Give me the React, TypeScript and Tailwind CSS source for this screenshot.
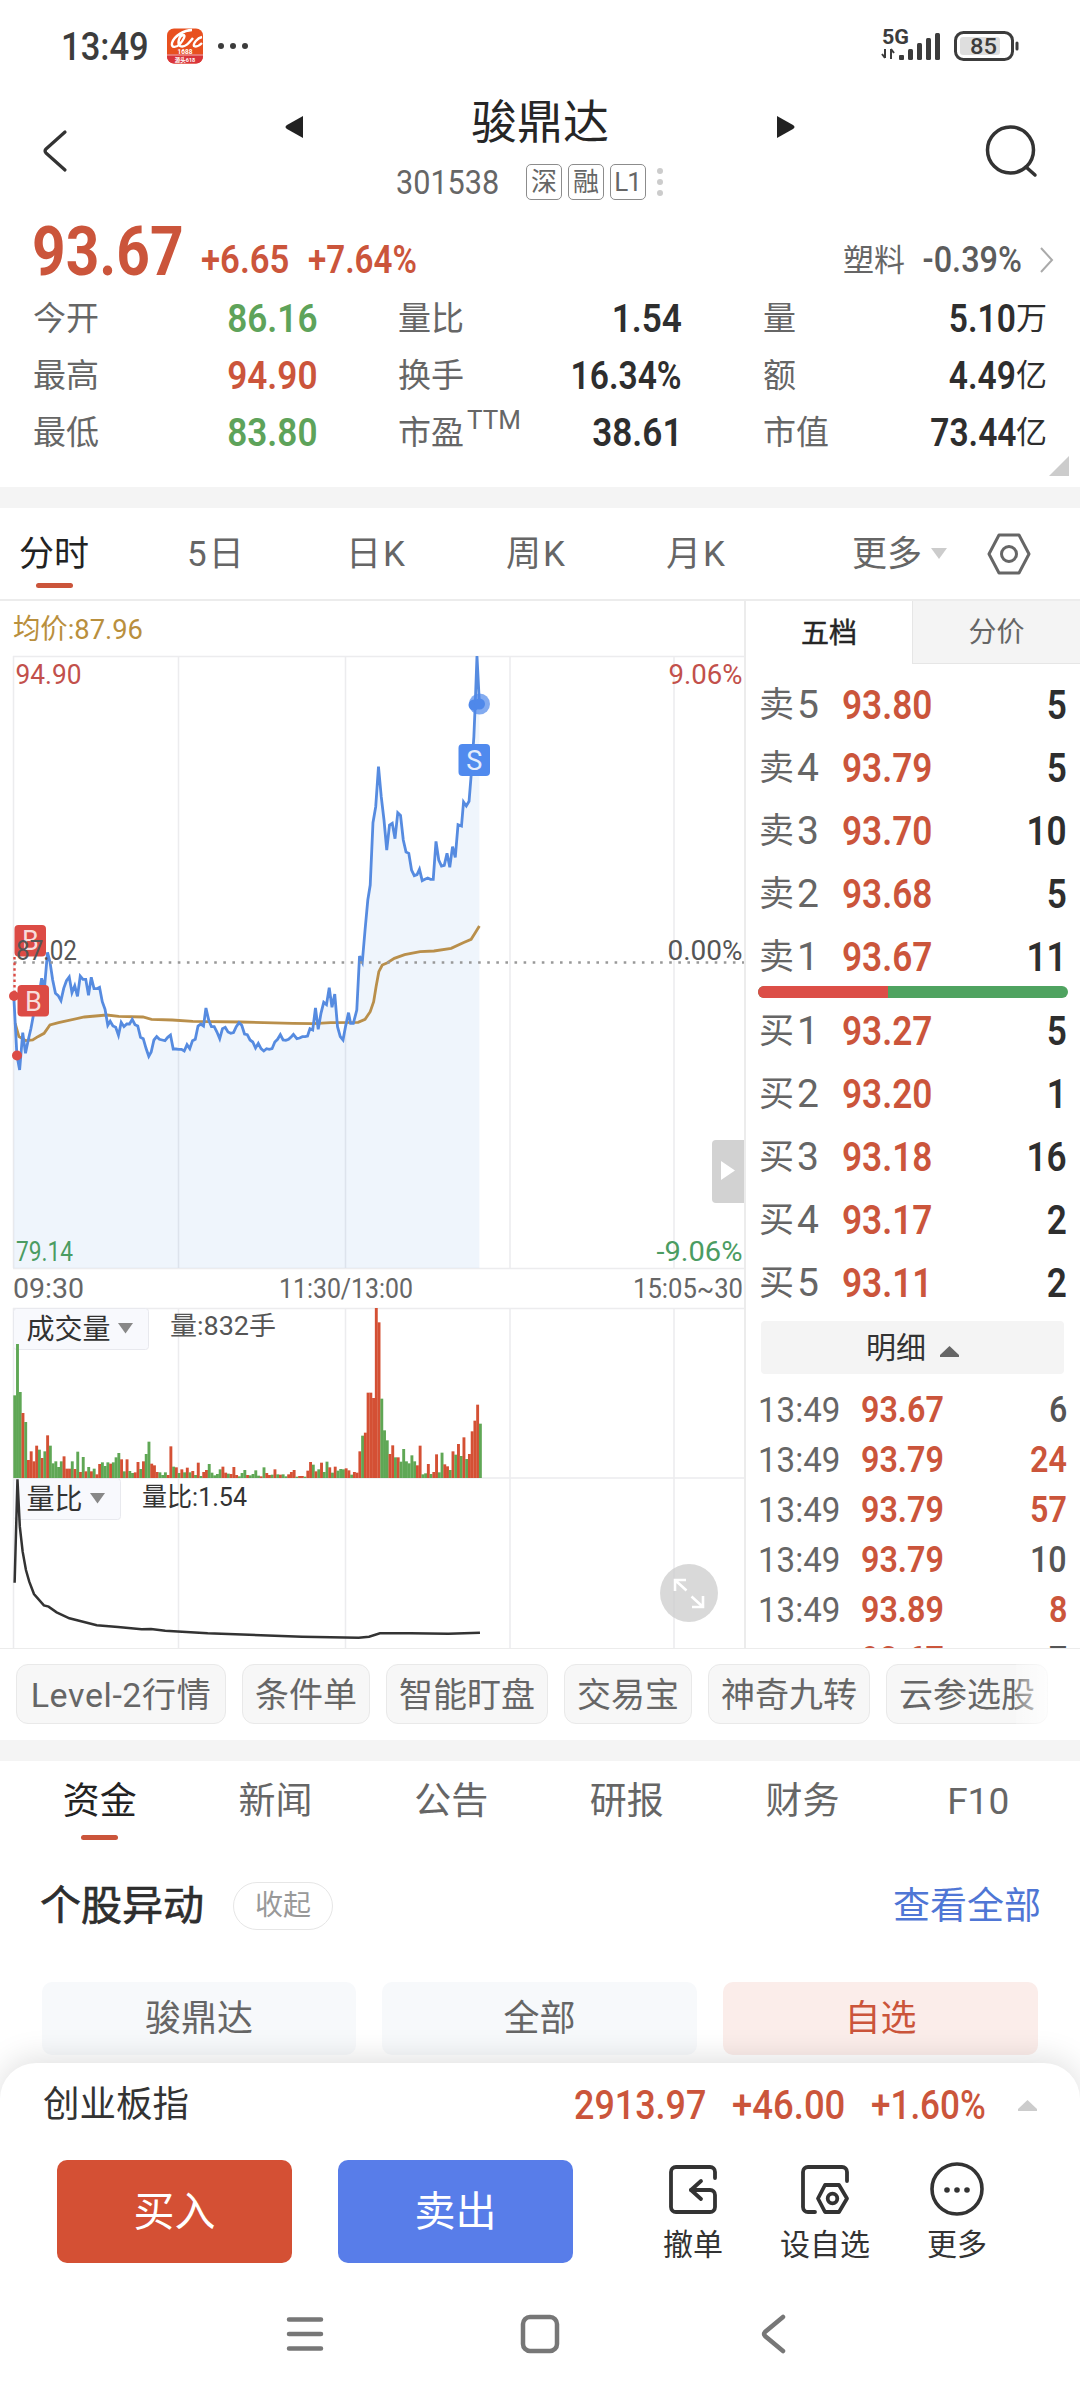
import { clsx } from "clsx";

type Level = { label: string; no: number; price: string; qty: string };

const asks: Level[] = [
  { label: "卖", no: 5, price: "93.80", qty: "5" },
  { label: "卖", no: 4, price: "93.79", qty: "5" },
  { label: "卖", no: 3, price: "93.70", qty: "10" },
  { label: "卖", no: 2, price: "93.68", qty: "5" },
  { label: "卖", no: 1, price: "93.67", qty: "11" },
];

const bids: Level[] = [
  { label: "买", no: 1, price: "93.27", qty: "5" },
  { label: "买", no: 2, price: "93.20", qty: "1" },
  { label: "买", no: 3, price: "93.18", qty: "16" },
  { label: "买", no: 4, price: "93.17", qty: "2" },
  { label: "买", no: 5, price: "93.11", qty: "2" },
];

const ticks = [
  { time: "13:49", price: "93.67", qty: "6", up: false },
  { time: "13:49", price: "93.79", qty: "24", up: true },
  { time: "13:49", price: "93.79", qty: "57", up: true },
  { time: "13:49", price: "93.79", qty: "10", up: false },
  { time: "13:49", price: "93.89", qty: "8", up: true },
  { time: "", price: "93.67", qty: "7", up: false },
];

const priceLine =
  "40,1067 49,1245 57,1290 66,1178 74,1240 82,1200 90,1165 98,1120 106,1090 114,1060 121,1015 129,1045 138,937 145,965 153,1020 161,1060 169,1067 177,1082 185,1045 193,1022 201,1011 209,1058 217,1037 225,1069 233,1008 241,1018 249,1018 257,1066 265,1012 273,1046 281,1046 289,1042 297,1085 305,1108 313,1156 320,1144 328,1158 336,1162 344,1186 352,1147 360,1160 368,1152 376,1152 384,1138 392,1154 400,1158 408,1192 416,1196 424,1225 432,1249 439,1236 447,1200 455,1190 463,1198 471,1200 479,1202 487,1192 495,1185 503,1227 511,1227 519,1228 527,1228 535,1233 543,1214 551,1226 559,1202 567,1198 575,1158 583,1152 591,1158 598,1104 606,1140 614,1160 622,1160 630,1176 638,1196 646,1166 654,1162 662,1176 670,1180 678,1178 686,1160 694,1148 702,1156 710,1182 718,1184 726,1200 734,1206 742,1224 750,1210 758,1226 766,1233 774,1226 782,1228 790,1226 798,1206 806,1198 814,1184 822,1200 830,1201 838,1198 846,1190 852,1183 862,1196 870,1194 878,1190 886,1190 893,1188 900,1166 908,1170 916,1104 924,1168 932,1120 940,1087 948,1094 956,1043 964,1102 972,1062 980,1160 988,1190 996,1200 1004,1156 1012,1118 1018,1150 1026,1150 1036,1110 1044,948 1052,966 1060,870 1068,780 1075,735 1083,548 1091,500 1099,380 1107,470 1115,540 1123,630 1131,555 1139,550 1147,596 1155,518 1163,526 1171,600 1179,636 1187,640 1195,690 1203,707 1211,704 1218,688 1226,722 1234,718 1242,714 1250,718 1258,718 1266,604 1274,660 1282,678 1290,676 1298,640 1306,682 1314,620 1322,652 1330,554 1340,558 1346,486 1354,498 1362,484 1368,407 1376,290 1380,190 1385,48 1392,190";

const averageLine =
  "44,1150 55,1190 75,1202 95,1200 110,1190 128,1180 145,1155 170,1148 245,1131 310,1125 345,1129 415,1131 440,1138 500,1140 560,1144 700,1146 850,1150 910,1151 960,1148 1040,1147 1060,1138 1075,1115 1085,1085 1092,1040 1100,995 1110,975 1125,968 1145,955 1175,944 1220,935 1260,933 1310,925 1345,908 1368,898 1380,878 1392,858";

const ratioLine =
  "31,1208 37,898 42,1040 48,1115 55,1170 62,1205 72,1242 93,1276 103,1280 120,1297 147,1315 205,1336 250,1341 300,1348 320,1347 350,1352 440,1360 640,1370 760,1373 782,1370 805,1360 870,1360 950,1361 1017,1358";

// one entry per minute: g = down, r = up
const volumes =
  "g248 g402 g258 r195 g168 r54 r80 r50 r97 g85 r60 g80 r128 g97 g44 g50 g33 g50 r65 r28 r28 g50 r27 g79 r18 g63 r20 g33 r20 g28 r11 r42 g47 g36 g47 r43 g47 g62 g75 r56 g20 r56 g21 g15 r17 r48 g27 r50 g72 g109 r43 r38 r18 g17 g9 g17 r9 r95 g34 r32 g15 r26 g17 r31 g17 r21 g9 r46 g6 r18 r24 g42 g16 g8 g12 g26 r34 r16 g13 r12 r33 r9 g5 g15 g24 r9 g8 g12 g23 g7 r5 g32 r15 r9 g10 r26 g11 r10 g11 g5 r11 r18 r24 g4 r6 r6 g4 r22 r48 g40 r20 g26 r46 g18 g49 r32 g16 r34 g22 g27 g26 r29 r23 g10 r18 r16 r80 g127 r136 r256 r256 r240 r510 r467 g238 g143 g113 r72 r98 g62 r62 g49 g87 g50 g44 g68 g50 r38 r97 g11 g14 r42 g12 r18 r71 g17 g76 r41 r35 g24 r80 g70 r102 g66 r122 g57 r72 r140 r172 r220 g163".split(
    " ",
  );

function StatusBar() {
  return (
    <div className="flex h-[92px] shrink-0 items-center pl-[61px] pr-[60px] text-[#3c3c3c]">
      <span className="mt-px w-[106px] origin-left scale-x-[.91] text-[38px] font-medium leading-none">
        13:49
      </span>
      <svg width="36" height="36" viewBox="0 0 36 36">
        <rect width="36" height="35" y="0.5" rx="7" fill="#e8501f" />
        <path d="M0 26h36v2.500a7 7 0 0 1-7 7H7a7 7 0 0 1-7-7z" fill="#d9343b" />
        <path
          d="M25 2C17 2 7 8 5 15c-1 5 4 5 8 1 4-5 6-9 3-9-4 1-6 8-3 11 5 2 9-3 13-8M35 9c-5 1-9 7-8 9 2 1 5 0 8-3"
          fill="none"
          stroke="#fff"
          strokeWidth="2.400"
        />
        <path d="M0 27h36" stroke="#f6b9a8" strokeWidth="1" />
        <text x="18" y="26" fontSize="6.500" fontWeight="700" fill="#fff" textAnchor="middle">
          1688
        </text>
        <text x="18" y="33.500" fontSize="5.500" fontWeight="700" fill="#fff" textAnchor="middle">
          源头618
        </text>
      </svg>
      <div className="ml-[15px] flex gap-[6px]">
        <i className="size-[6px] rounded-full bg-[#3c3c3c]" />
        <i className="size-[6px] rounded-full bg-[#3c3c3c]" />
        <i className="size-[6px] rounded-full bg-[#3c3c3c]" />
      </div>
      <svg className="ml-auto mt-[-1px] overflow-visible" width="138" height="36" viewBox="0 0 138 36" fill="#3c3c3c">
        <text x="0" y="16" fontSize="20" fontWeight="700" textLength="27" lengthAdjust="spacingAndGlyphs">
          5G
        </text>
        <path d="M3 21v9M0 26l3 4M9 31v-10M12 25l-3-4" stroke="#3c3c3c" strokeWidth="2" fill="none" />
        <rect x="17" y="27" width="5" height="5" rx="1" />
        <rect x="26" y="21" width="5" height="11" rx="1.500" />
        <rect x="35" y="15" width="5" height="17" rx="1.500" />
        <rect x="44" y="10" width="5" height="22" rx="1.500" />
        <rect x="53" y="5" width="5" height="27" rx="1.500" />
        <rect x="73.500" y="4.500" width="57" height="27" rx="8" fill="none" stroke="#3c3c3c" strokeWidth="3" />
        <rect x="78" y="9" width="40" height="18" rx="3" fill="#dedede" />
        <rect x="133.500" y="13.500" width="3" height="9" rx="1.500" />
        <text x="88" y="25.500" fontSize="22" fontWeight="500" textLength="27" lengthAdjust="spacingAndGlyphs">
          85
        </text>
      </svg>
    </div>
  );
}

function Header() {
  return (
    <header className="flex h-[124px] shrink-0 items-start pl-[42px] pr-[41px]">
      <svg className="mt-[37px]" width="26" height="44" viewBox="0 0 26 44">
        <path d="M23 3L4 20q-2 2 0 4l19 17" fill="none" stroke="#333" strokeWidth="3.200" strokeLinecap="round" />
      </svg>
      <svg className="ml-[216px] mt-[23px]" width="20" height="24" viewBox="0 0 20 24">
        <path d="M19 1v22L3 14q-3-2 0-4z" fill="#222" />
      </svg>
      <div className="mx-auto flex w-[300px] flex-col items-center">
        <h1 className="mt-[5px] text-[46px] font-normal leading-[50px] text-[#262626]">骏鼎达</h1>
        <div className="mr-[22px] mt-[16px] flex h-[37px] items-center gap-[6px] text-[#666]">
          <span className="mr-[7px] w-[117px] origin-left scale-x-[.9] text-[34px] leading-none">301538</span>
          {["深", "融", "L1"].map((tag) => (
            <span
              key={tag}
              className="flex size-[36px] items-center justify-center rounded-[5px] border border-[#8c8c8c] text-[26px] leading-none tracking-[-1px]"
            >
              {tag}
            </span>
          ))}
          <span className="ml-[5px] flex flex-col gap-[5px]">
            <i className="size-[6px] rounded-full bg-[#ccc]" />
            <i className="size-[6px] rounded-full bg-[#ccc]" />
            <i className="size-[6px] rounded-full bg-[#ccc]" />
          </span>
        </div>
      </div>
      <svg className="mr-[189px] mt-[23px]" width="20" height="24" viewBox="0 0 20 24">
        <path d="M1 1v22l16-9q3-2 0-4z" fill="#222" />
      </svg>
      <svg className="mt-[32px]" width="54" height="54" viewBox="0 0 54 54" fill="none" stroke="#333" strokeWidth="3.500">
        <circle cx="25.500" cy="26" r="23" />
        <path d="M41 43l9 8" strokeLinecap="round" />
      </svg>
    </header>
  );
}

type StatProps = { label: string; sup?: string; value: string; unit?: string; tone?: "up" | "down" };

function Stat({ label, sup, value, unit, tone }: StatProps) {
  return (
    <div className="flex h-[57px] items-center justify-between">
      <span className="flex items-center text-[33px] leading-none text-[#666]">
        {label}
        {sup && <sup className="top-0 -mt-[26px] ml-[3px] text-[26px] leading-none">{sup}</sup>}
      </span>
      <span
        className={clsx(
          "flex items-center whitespace-nowrap leading-none",
          tone === "up" && "text-[#cb553b]",
          tone === "down" && "text-[#5ea35a]",
          !tone && "text-[#2e2e2e]",
        )}
      >
        <b
          className={clsx(
            "origin-right text-[39.500px] font-semibold",
            value.endsWith("%") || unit ? "scale-x-[.85]" : "scale-x-[.89]",
          )}
        >
          {value}
        </b>
        {unit && <span className="text-[31px]">{unit}</span>}
      </span>
    </div>
  );
}

function Quote() {
  return (
    <section className="flex h-[271px] shrink-0 flex-col">
      <div className="flex h-[73px] items-center text-[#cb553b]">
        <b className="-mt-[2px] ml-[32px] w-[169px] origin-left scale-x-[.85] text-[69px] font-bold leading-none">93.67</b>
        <span className="mt-[16px] w-[107px] origin-left scale-x-[.89] text-[39px] font-semibold leading-none">+6.65</span>
        <span className="mt-[16px] origin-left scale-x-[.85] text-[39px] font-semibold leading-none">+7.64%</span>
        <span className="ml-auto mt-[15px] text-[31px] leading-none text-[#666]">塑料</span>
        <span className="mt-[16px] w-[117px] origin-right scale-x-[.89] whitespace-nowrap text-right text-[36.500px] font-medium leading-none text-[#5c5c5c]">
          -0.39%
        </span>
        <svg className="ml-[18px] mr-[26px] mt-[14px]" width="14" height="26" viewBox="0 0 14 26">
          <path d="M1 1l11 12L1 25" fill="none" stroke="#aaa" strokeWidth="2" />
        </svg>
      </div>
      <div className="mt-px grid grid-cols-[284px_284px_284px] gap-x-[81px] pl-[33px]">
        <Stat label="今开" value="86.16" tone="down" />
        <Stat label="量比" value="1.54" />
        <Stat label="量" value="5.10" unit="万" />
        <Stat label="最高" value="94.90" tone="up" />
        <Stat label="换手" value="16.34%" />
        <Stat label="额" value="4.49" unit="亿" />
        <Stat label="最低" value="83.80" tone="down" />
        <Stat label="市盈" sup="TTM" value="38.61" />
        <Stat label="市值" value="73.44" unit="亿" />
      </div>
      <svg className="ml-auto mr-[11px] mt-[-5px]" width="20" height="20" viewBox="0 0 20 20">
        <path d="M20 0v20H0z" fill="#ccc" />
      </svg>
    </section>
  );
}

function PeriodTabs() {
  return (
    <nav className="flex h-[93px] shrink-0 items-center border-b-2 border-[#ececec] pl-[19px] pt-[2px] text-[35px] leading-none text-[#666]">
      <span className="relative w-[168px] text-[#222]">
        分时
        <i className="absolute -bottom-[16px] left-[17px] h-[5px] w-[37px] rounded-full bg-[#cb553b]" />
      </span>
      <span className="w-[159px] tracking-[2px]">5日</span>
      <span className="w-[160px] tracking-[2px]">日K</span>
      <span className="w-[160px] tracking-[2px]">周K</span>
      <span className="w-[186px] tracking-[2px]">月K</span>
      <span>更多</span>
      <svg className="-mt-[2px] ml-[9px]" width="16" height="11" viewBox="0 0 16 11">
        <path d="M0 0h16L8 11z" fill="#ccc" />
      </svg>
      <svg className="-mt-[2px] ml-[40px]" width="44" height="42" viewBox="0 0 44 42" fill="none" stroke="#666" strokeWidth="3">
        <path d="M12 2h20l10 19-10 19H12L2 21z" strokeLinejoin="round" />
        <circle cx="22" cy="21" r="7.500" />
      </svg>
    </nav>
  );
}

function Charts() {
  const label = { lengthAdjust: "spacingAndGlyphs" as const, fontSize: 28 };
  return (
    <svg width="744" height="1047" viewBox="0 601 744 1047" className="block shrink-0">
      {/* grid */}
      <g fill="none" stroke="#ececee" strokeWidth="1.500">
        <path d="M13 656.500H744M13 1268.500H744M13 1308.500H744M13 1478H744" />
        <path d="M13.500 656V1268M178.500 656V1268M345.500 656V1268M510 656V1268M674 656V1268" />
        <path d="M13.500 1308V1648M178.500 1308V1648M345.500 1308V1648M510 1308V1648M674 1308V1648" />
      </g>

      {/* price */}
      <g transform="translate(0 640) scale(.34439 .33333)">
        <polygon points={`40,1884 ${priceLine} 1392,1884`} fill="#4b86e0" fillOpacity=".085" />
        <polyline points={averageLine} fill="none" stroke="#b98f4b" strokeWidth="2.800" vectorEffect="non-scaling-stroke" />
        <polyline points={priceLine} fill="none" stroke="#568be0" strokeWidth="2.800" vectorEffect="non-scaling-stroke" />
      </g>
      <path d="M14 962.500H744" stroke="#999" strokeWidth="2.400" strokeDasharray="2.600 6.500" />
      <circle cx="479.500" cy="704" r="10.500" fill="#4f88ea" fillOpacity=".7" />
      <circle cx="474" cy="705" r="5.500" fill="#4f88ea" />
      <circle cx="479.500" cy="704" r="5.500" fill="#4f88ea" />
      <rect x="458.500" y="744" width="31.500" height="32" rx="4" fill="#508aee" />
      <text x="474.300" y="769.500" fontSize="27" fill="#e4edfc" textAnchor="middle">
        S
      </text>
      <path d="M14.500 957V996" stroke="#dc4b45" strokeWidth="2.400" strokeDasharray="2.600 3" />
      <circle cx="14" cy="996" r="5" fill="#dc4b45" />
      <circle cx="17" cy="1055.500" r="5" fill="#dc4b45" />
      <rect x="14.500" y="925" width="31.500" height="31.500" rx="4" fill="#dc4b45" />
      <text x="30.500" y="950" fontSize="27" fill="#f8dcdb" textAnchor="middle">
        B
      </text>
      <rect x="17.500" y="985" width="31.500" height="31.500" rx="4" fill="#dc4b45" />
      <text x="33.300" y="1010.500" fontSize="27" fill="#f8dcdb" textAnchor="middle">
        B
      </text>

      <text x="13" y="638.500" textLength="130" {...label} fill="#b98f3d">
        均价:87.96
      </text>
      <text x="15.500" y="684" textLength="66" {...label} fill="#c2504b">
        94.90
      </text>
      <text x="668.500" y="684" textLength="74" {...label} fill="#c2504b">
        9.06%
      </text>
      <text x="16" y="960" textLength="61" {...label} fill="#555">
        87.02
      </text>
      <text x="667.500" y="960" textLength="75" {...label} fill="#555">
        0.00%
      </text>
      <text x="16" y="1261" textLength="57" {...label} fill="#4b9c62">
        79.14
      </text>
      <text x="656.500" y="1261" textLength="86" {...label} fill="#4b9c62">
        -9.06%
      </text>
      <g fill="#666">
        <text x="13" y="1298" textLength="71" {...label}>
          09:30
        </text>
        <text x="279" y="1298" textLength="134" {...label}>
          11:30/13:00
        </text>
        <text x="633" y="1298" textLength="110" {...label}>
          15:05~30
        </text>
      </g>

      {/* side handle */}
      <path d="M744 1140h-28a4 4 0 0 0-4 4v55a4 4 0 0 0 4 4h28z" fill="#d2d2d2" />
      <path d="M721 1161v19l14-9.500z" fill="#fff" />

      {/* volume */}
      <rect x="13.500" y="1308.500" width="135" height="41" rx="3" fill="#f8f9fd" stroke="#e8e9ee" />
      {volumes.map((v, i) => {
        const h = Number(v.slice(1)) / 3;
        return (
          <rect
            key={i}
            x={13.3 + i * 2.739}
            y={1478 - h}
            width="2.900"
            height={h}
            fill={v[0] === "g" ? "#5fa755" : "#d45034"}
          />
        );
      })}
      <text x="26.500" y="1339" fontSize="28" textLength="84" fill="#333">
        成交量
      </text>
      <path d="M118 1323h15l-7.500 10.500z" fill="#888" />
      <text x="170" y="1335" textLength="106" {...label} fontSize={26} fill="#555">
        量:832手
      </text>

      {/* volume ratio */}
      <rect x="13.500" y="1478.500" width="107" height="41" rx="3" fill="#f8f9fd" stroke="#e8e9ee" />
      <g transform="translate(0 1180) scale(.47194 .33333)">
        <polyline points={ratioLine} fill="none" stroke="#333" strokeWidth="2.500" vectorEffect="non-scaling-stroke" />
      </g>
      <text x="26.500" y="1509" fontSize="28" textLength="56" fill="#333">
        量比
      </text>
      <path d="M90 1493h15l-7.500 10.500z" fill="#888" />
      <text x="142" y="1505.500" textLength="105" {...label} fontSize={26} fill="#333">
        量比:1.54
      </text>

      {/* expand */}
      <circle cx="689" cy="1593" r="29" fill="#ccc" fillOpacity=".75" />
      <path
        d="M675 1591v-11h11M675.500 1580.500l11 10M703 1596v11h-11M702.500 1606.500l-11-10"
        fill="none"
        stroke="#fff"
        strokeWidth="2.600"
      />
    </svg>
  );
}

function LevelRow({ label, no, price, qty }: Level) {
  return (
    <div className="flex h-[63px] items-center leading-none">
      <span className="flex w-[83px] items-center text-[35px] text-[#666]">
        {label}
        <span className="ml-[3px] text-[39px]">{no}</span>
      </span>
      <b className="origin-left scale-x-[.88] text-[40px] font-semibold text-[#cb553b]">{price}</b>
      <b className="ml-auto origin-right scale-x-[.88] text-[40px] font-semibold text-[#2e2e2e]">{qty}</b>
    </div>
  );
}

function OrderBook() {
  return (
    <aside className="flex h-[1047px] w-[336px] shrink-0 flex-col overflow-hidden border-l-2 border-[#ececec]">
      <div className="flex h-[63px] shrink-0 text-[28px] leading-none">
        <span className="flex w-[166px] items-center justify-center pt-[2px] text-[#262626] [-webkit-text-stroke:0.5px]">
          五档
        </span>
        <span className="flex flex-1 items-center justify-center border-b border-l border-[#e6e6e6] bg-[#f4f4f4] pt-[2px] text-[#666]">
          分价
        </span>
      </div>
      <div className="flex flex-col pl-[13px] pr-[13px] pt-[10px]">
        {asks.map((level) => (
          <LevelRow key={level.no} {...level} />
        ))}
        <div className="mt-[-3px] -ml-px flex h-[12px] w-[310px] overflow-hidden rounded-full bg-[#4fa360]">
          <i className="w-[130px] bg-[#dc4e47]" />
        </div>
        <div className="h-[2px]" />
        {bids.map((level) => (
          <LevelRow key={level.no} {...level} />
        ))}
      </div>
      <div className="ml-[15px] mt-[6px] flex h-[53px] w-[303px] shrink-0 items-center justify-center gap-[14px] rounded-[4px] bg-[#f4f4f4] text-[30px] leading-none text-[#333]">
        明细
        <svg className="mt-[8px]" width="19" height="11" viewBox="0 0 19 11">
          <path d="M9.500 0L19 9v2H0V9z" fill="#666" />
        </svg>
      </div>
      <div className="flex flex-col pl-[12px] pr-[13px] pt-[11px]">
        {ticks.map((tick, i) => (
          <div key={i} className="flex h-[50px] shrink-0 items-center leading-none">
            <span className="w-[103px] origin-left scale-x-[.96] text-[34.500px] text-[#666]">{tick.time}</span>
            <b className="origin-left scale-x-[.86] text-[37.500px] font-semibold text-[#cb553b]">{tick.price}</b>
            <b
              className={clsx(
                "ml-auto origin-right scale-x-[.86] text-[37.500px]",
                tick.up ? "font-semibold text-[#cb553b]" : "font-medium text-[#555]",
              )}
            >
              {tick.qty}
            </b>
          </div>
        ))}
      </div>
    </aside>
  );
}

function Shortcuts() {
  const items = ["Level-2行情", "条件单", "智能盯盘", "交易宝", "神奇九转", "云参选股"];
  const widths = ["w-[210px]", "w-[128px]", "w-[162px]", "w-[128px]", "w-[162px]", "w-[162px]"];
  return (
    <div className="relative flex h-[92px] shrink-0 gap-[16px] border-t border-[#ececec] pl-[16px] pt-[15px]">
      {items.map((item, i) => (
        <span
          key={item}
          className={clsx(
            "flex h-[60px] shrink-0 items-center justify-center whitespace-nowrap rounded-[12px] border border-[#e9e9e9] bg-[#f7f7f7] pt-px text-[34px] leading-none text-[#666]",
            i === 0 && "tracking-[.6px]",
            widths[i],
          )}
        >
          {item}
        </span>
      ))}
      <div className="absolute right-[30px] top-0 h-[84px] w-[34px] bg-gradient-to-r from-white/20 to-white/80" />
    </div>
  );
}

function News() {
  return (
    <section className="flex h-[302px] shrink-0 flex-col">
      <nav className="ml-[12px] grid h-[80px] w-[1054px] grid-cols-6 items-center text-center text-[37px] leading-none text-[#666]">
        <span className="relative text-[#222]">
          资金
          <i className="absolute -bottom-[20px] left-[69px] h-[5px] w-[37px] rounded-full bg-[#cb553b]" />
        </span>
        <span>新闻</span>
        <span>公告</span>
        <span>研报</span>
        <span>财务</span>
        <span>F10</span>
      </nav>
      <div className="mt-[31px] flex h-[68px] items-center pl-[40px] pr-[39px]">
        <h2 className="text-[41px] font-normal leading-none text-[#2e2e2e] [-webkit-text-stroke:0.7px]">个股异动</h2>
        <span className="ml-[29px] flex h-[48px] w-[100px] items-center justify-center rounded-full border border-[#e6e6e6] text-[28px] leading-none text-[#999]">
          收起
        </span>
        <a className="ml-auto pt-px text-[37px] leading-none text-[#4f76d5]">查看全部</a>
      </div>
      <div className="mt-[42px] flex h-[73px] shrink-0 gap-[26px] pl-[42px] text-[36px] leading-none">
        <span className="flex w-[314px] items-center justify-center rounded-[10px] bg-[#f7f9fb] text-[#666]">骏鼎达</span>
        <span className="flex w-[315px] items-center justify-center rounded-[10px] bg-[#f7f9fb] text-[#666]">全部</span>
        <span className="flex w-[315px] items-center justify-center rounded-[10px] bg-[#fbedea] text-[#cb553b]">自选</span>
      </div>
    </section>
  );
}

function TradeBar() {
  return (
    <footer className="relative flex h-[337px] shrink-0 flex-col rounded-t-[36px] bg-white shadow-[0_-4px_32px_rgba(0,0,0,0.13)]">
      <div className="flex h-[82px] items-center pl-[43px] pt-[2px] leading-none text-[#cb553b]">
        <span className="text-[36.500px] text-[#333]">创业板指</span>
        <span className="ml-auto w-[158px] origin-left scale-x-[.875] text-[41px] font-medium">2913.97</span>
        <span className="w-[139px] origin-left scale-x-[.89] text-[41px] font-medium">+46.00</span>
        <span className="w-[147px] origin-left scale-x-[.855] text-[41px] font-medium">+1.60%</span>
        <svg className="mr-[43px]" width="19" height="11" viewBox="0 0 19 11">
          <path d="M9.500 0L19 9v2H0V9z" fill="#ccc" />
        </svg>
      </div>
      <div className="mt-[15px] flex h-[103px] pl-[57px]">
        <button className="w-[235px] rounded-[10px] bg-[#d45034] pt-px text-[41px] leading-none text-white">买入</button>
        <button className="ml-[46px] w-[235px] rounded-[10px] bg-[#587de9] pt-px text-[41px] leading-none text-white">
          卖出
        </button>
        <div className="ml-[54px] flex text-[30px] leading-none text-[#333]">
          <div className="flex w-[132px] flex-col items-center gap-[12px]">
            <svg width="54" height="58" viewBox="0 0 54 58" fill="none" stroke="#333" strokeWidth="3.800">
              <path d="M49 18v-6a5 5 0 0 0-5-5H10a5 5 0 0 0-5 5v35a5 5 0 0 0 5 5h34a5 5 0 0 0 5-5V35a5 5 0 0 0-5-5H25" strokeLinecap="round" />
              <path d="M35 21l-10 9 10 9" strokeLinecap="round" strokeLinejoin="round" />
            </svg>
            撤单
          </div>
          <div className="flex w-[132px] flex-col items-center gap-[12px]">
            <svg width="54" height="58" viewBox="0 0 54 58" fill="none" stroke="#333" strokeWidth="3.800">
              <path d="M49 21v-9a5 5 0 0 0-5-5H10a5 5 0 0 0-5 5v35a5 5 0 0 0 5 5h7" strokeLinecap="round" />
              <path d="M27 25h14l8 13.500L41 52H27l-7-13.500z" strokeLinejoin="round" />
              <circle cx="34.500" cy="38.500" r="4.800" />
            </svg>
            设自选
          </div>
          <div className="flex w-[132px] flex-col items-center gap-[12px]">
            <svg width="54" height="58" viewBox="0 0 54 58" fill="none" stroke="#333" strokeWidth="3.600">
              <circle cx="27" cy="29" r="25" />
              <g fill="#333" stroke="none">
                <circle cx="17" cy="30" r="2.800" />
                <circle cx="27" cy="30" r="2.800" />
                <circle cx="37" cy="30" r="2.800" />
              </g>
            </svg>
            更多
          </div>
        </div>
      </div>
      <div className="mt-[48px] flex h-[45px] items-center pl-[286px]">
        <svg width="38" height="38" viewBox="0 0 38 38" stroke="#777" strokeWidth="4.500" strokeLinecap="round">
          <path d="M3 4.500h32M3 19h32M3 33.500h32" />
        </svg>
        <svg className="ml-[196px]" width="40" height="40" viewBox="0 0 40 40" fill="none" stroke="#777" strokeWidth="4.500">
          <rect x="3" y="3" width="34" height="34" rx="7" />
        </svg>
        <svg className="ml-[200px]" width="26" height="40" viewBox="0 0 26 40" fill="none" stroke="#777" strokeWidth="4.500">
          <path d="M23 3L5 18q-2 2 0 4l18 15" strokeLinecap="round" />
        </svg>
      </div>
    </footer>
  );
}

export default function App() {
  return (
    <div className="flex h-[2400px] w-[1080px] flex-col overflow-hidden bg-white font-['Roboto','Noto_Sans_CJK_SC',sans-serif]">
      <StatusBar />
      <Header />
      <Quote />
      <div className="h-[21px] shrink-0 bg-[#f4f4f4]" />
      <PeriodTabs />
      <div className="flex h-[1047px] shrink-0">
        <Charts />
        <OrderBook />
      </div>
      <Shortcuts />
      <div className="h-[21px] shrink-0 bg-[#f4f4f4]" />
      <News />
      <TradeBar />
    </div>
  );
}
